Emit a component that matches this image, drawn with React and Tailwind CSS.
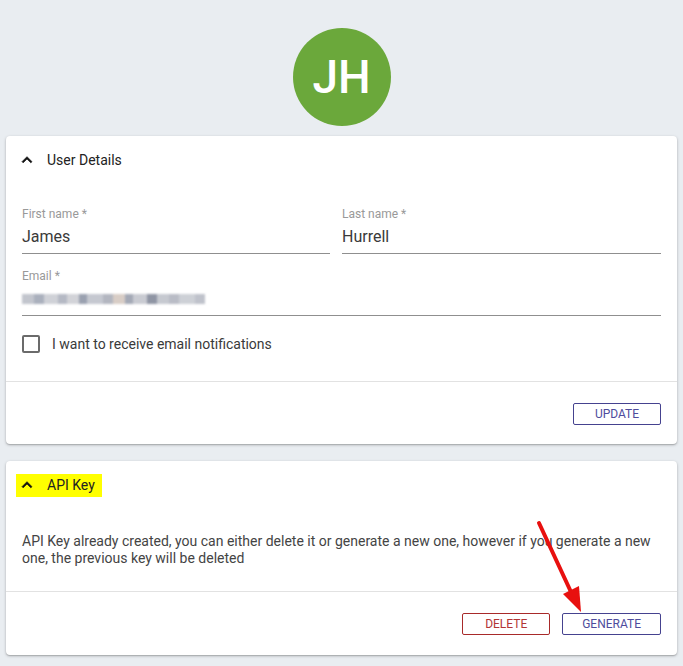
import React from "react";

function Chevron() {
  return (
    <svg width="20" height="20" viewBox="0 0 24 24" className="shrink-0">
      <path d="M12 8l-6 6 1.41 1.41L12 10.83l4.59 4.58L18 14z" fill="#111" stroke="#111" strokeWidth="0.8" />
    </svg>
  );
}

const blurBlocks = [
  ["w-[12px]", "bg-[#c2c5cd]"],
  ["w-[10px]", "bg-[#aab0bd]"],
  ["w-[14px]", "bg-[#cfd1d7]"],
  ["w-[9px]", "bg-[#b5b9c4]"],
  ["w-[12px]", "bg-[#d2d3d8]"],
  ["w-[8px]", "bg-[#9aa1b0]"],
  ["w-[16px]", "bg-[#c5c8d0]"],
  ["w-[10px]", "bg-[#b3b6c0]"],
  ["w-[12px]", "bg-[#d8cdc6]"],
  ["w-[8px]", "bg-[#a4a9b6]"],
  ["w-[14px]", "bg-[#c9cbd2]"],
  ["w-[10px]", "bg-[#8f95a4]"],
  ["w-[12px]", "bg-[#c6c9d0]"],
  ["w-[10px]", "bg-[#b9bcc6]"],
  ["w-[16px]", "bg-[#cdd0d6]"],
  ["w-[10px]", "bg-[#bfc2cb]"],
];

function Field({ label, value, blurred }) {
  return (
    <div className="flex flex-col">
      <div className="text-[12px] leading-[14px] text-[#999]">{label} *</div>
      <div className="pt-[6px] pb-[7px] border-b border-[#8f8f8f] text-[16px] leading-[19px] text-[#3a3a3a] h-[33px]">
        {blurred ? (
          <div className="flex items-center h-[19px] blur-[1px]">
            {blurBlocks.map(([w, c], i) => (
              <span key={i} className={`${w} ${c} h-[10px]`} />
            ))}
          </div>
        ) : (
          value
        )}
      </div>
    </div>
  );
}

export default function App() {
  return (
    <div
      className="relative w-[683px] h-[666px] overflow-hidden bg-[#e9edf1] px-[6px] pt-[28px]"
      style={{ fontFamily: "Roboto, 'Liberation Sans', sans-serif" }}
    >
      <div className="flex justify-center">
        <div className="w-[98px] h-[98px] rounded-full bg-[#6ba83b] flex items-center justify-center text-white text-[46px] leading-none font-medium">
          JH
        </div>
      </div>

      <div className="mt-[10px] bg-white rounded-[4px] shadow-[0_1px_3px_rgba(0,0,0,0.25),0_1px_1px_rgba(0,0,0,0.12)]">
        <div className="h-[48px] flex items-center pl-[11px] gap-[10px]">
          <Chevron />
          <span className="text-[14px] text-[#222]">User Details</span>
        </div>
        <div className="px-[16px] pt-[23px] pb-[28px]">
          <div className="grid grid-cols-[308px_1fr] gap-x-[12px]">
            <Field label="First name" value="James" />
            <Field label="Last name" value="Hurrell" />
          </div>
          <div className="mt-[15px]">
            <Field label="Email" blurred />
          </div>
          <div className="mt-[19px] flex items-center gap-[12px]">
            <div className="w-[18px] h-[18px] border-2 border-[#6b6b6b] rounded-[2px]" />
            <span className="text-[14px] leading-[18px] text-[#3a3a3a]">I want to receive email notifications</span>
          </div>
        </div>
        <div className="border-t border-[#e2e2e2] flex justify-end px-[16px] pt-[21px] pb-[19px]">
          <button className="min-w-[88px] h-[22px] border border-[#45428f] rounded-[2px] text-[12px] text-[#4e4c9c] px-[14px]">
            UPDATE
          </button>
        </div>
      </div>

      <div className="mt-[17px] bg-white rounded-[4px] shadow-[0_1px_3px_rgba(0,0,0,0.25),0_1px_1px_rgba(0,0,0,0.12)]">
        <div className="h-[48px] flex items-center pl-[10px]">
          <div className="h-[23px] bg-[#ffff00] flex items-center pl-[1px] pr-[7px] gap-[10px]">
            <Chevron />
            <span className="text-[14px] text-[#222]">API Key</span>
          </div>
        </div>
        <div className="px-[16px] pt-[24px] pb-[24px] text-[14px] leading-[17px] text-[#444]">
          API Key already created, you can either delete it or generate a new one, however if you generate a new one, the previous key will be deleted
        </div>
        <div className="border-t border-[#e2e2e2] flex justify-end gap-[12px] px-[16px] pt-[21px] pb-[20px]">
          <button className="min-w-[88px] h-[22px] border border-[#a82a2a] rounded-[2px] text-[12px] text-[#b23535] px-[14px]">
            DELETE
          </button>
          <button className="min-w-[88px] h-[22px] border border-[#45428f] rounded-[2px] text-[12px] text-[#4e4c9c] px-[19px]">
            GENERATE
          </button>
        </div>
      </div>

      <svg className="absolute left-0 top-0 pointer-events-none" width="683" height="666">
        <line x1="539" y1="523" x2="571" y2="592" stroke="#e8100f" strokeWidth="4" strokeLinecap="round" />
        <polygon points="581,612 563,594 579,586" fill="#e8100f" />
      </svg>
    </div>
  );
}
